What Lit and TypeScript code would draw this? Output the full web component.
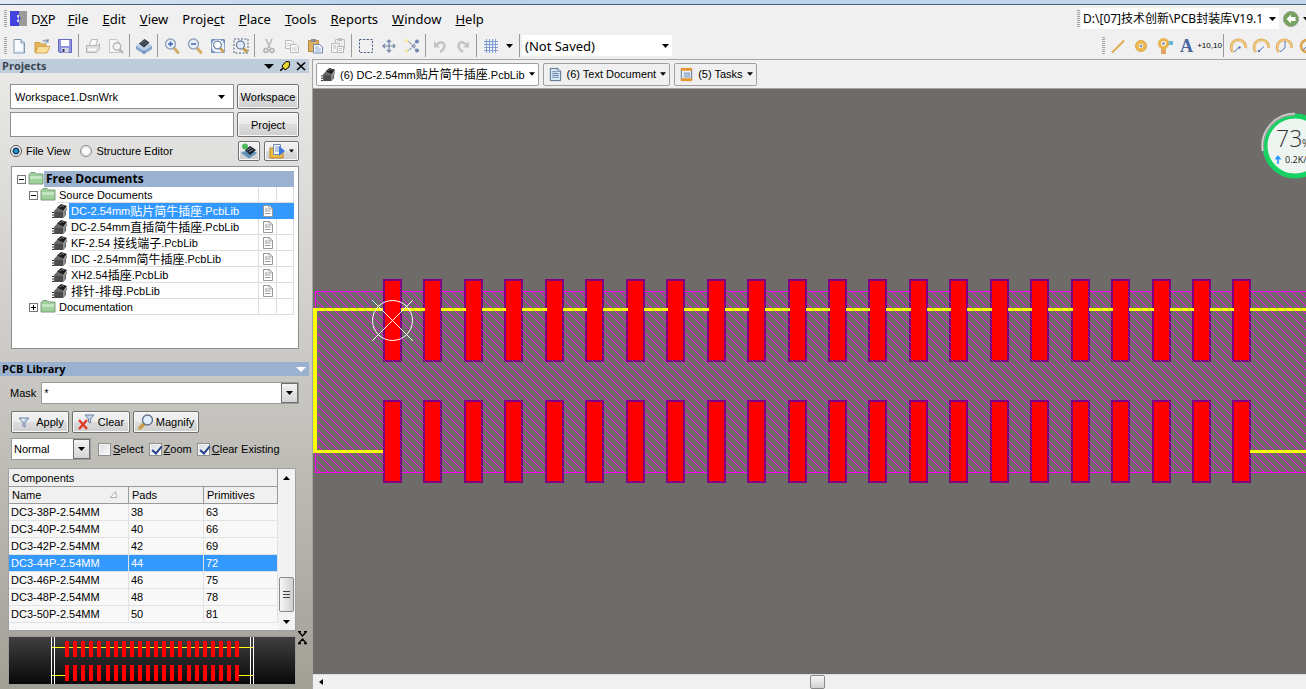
import { LitElement, html, svg, css, nothing } from "lit";
import { customElement, state } from "lit/decorators.js";
import { classMap } from "lit/directives/class-map.js";

const magnifier = svg`
  <path d="M10 10l4 4.500" stroke="#d3ad68" stroke-width="3" stroke-linecap="round"/>
  <circle cx="6.500" cy="6" r="5" fill="#e6effa" stroke="#94a4ba" stroke-width="1.400"/>`;

const chip = svg`
  <path d="M0 9.500h4M0 12h4M0 14.500h4" stroke="#222" stroke-width="1"/>
  <path d="M2 8l4-4 8 4v4l-3 3H2z" fill="#666"/>
  <path d="M3 9h8v6H3z" fill="#4b4b4b"/>
  <path d="M5 4.500L9 1l6 2-3.500 4.500z" fill="#1d1d1d"/>
  <path d="M7 4.500l3-2 2 .8" stroke="#777" fill="none"/>
  <path d="M11 8l4-4v3l-2 2v4l-2 2z" fill="#8c8c8c"/>`;

const funnel = svg`<path d="M3 4h10L9 8.500V13l-2-1V8.500z" fill="#c3d3e8" stroke="#6f86a6"/><path d="M5 5h4L7.500 7z" fill="#f4f8fd"/>`;

const gauge = (hand: unknown) => svg`
  <path d="M3 14A7.200 7.200 0 1 1 15.500 10" fill="none" stroke="#dba552" stroke-width="2.600"/>
  <path d="M3 13.500A7 7 0 1 1 15.300 10" fill="none" stroke="#f5cf87" stroke-width="1.200"/>${hand}`;

const icons: Record<string, unknown> = {
  newDoc: svg`<path d="M3 1.500h7l3.500 3.500v10H3z" fill="#f8fbff" stroke="#7c94ad"/><path d="M10 1.500v3.500h3.500" fill="#cfdfef" stroke="#7c94ad"/><path d="M12.500 6v8H5" fill="none" stroke="#b9d2ea"/>`,
  open: svg`<path d="M1 4.500h5l1.500 1.500H12v3H4l-2.500 5.500H1z" fill="#e3b75a" stroke="#cb9c4a"/><path d="M4 8.500h12l-3 6.500H1.500z" fill="#fbdf98" stroke="#d6a750"/><path d="M9 3.500q3-3 5 0m0-2.500v3h-3" fill="none" stroke="#7189a8" stroke-width="1.200"/>`,
  save: svg`<path d="M1.500 1.500h13v13h-12l-1-1z" fill="#8e94e0" stroke="#6469bd"/><path d="M4 2h8v6H4z" fill="#fff"/><path d="M4.500 10h7v4.500h-7z" fill="#d8dae6"/><path d="M5.500 11h2v3h-2z" fill="#33386f"/>`,
  print: svg`<path d="M4.500 7l2-5.500h6L11 7" fill="#fafafa" stroke="#b8b8b8"/><path d="M1.500 7.500h11l2-1.500v5l-3 3.500h-10z" fill="#dedede" stroke="#b3b3b3"/><path d="M3 11.500h8" stroke="#fff" stroke-width="2"/>`,
  preview: svg`<path d="M1.500 1.500h7l3 3v10h-10z" fill="#f6f6f6" stroke="#c4c4c4"/><path d="M11.500 11.500l3.500 3.500" stroke="#bbb" stroke-width="2.500"/><circle cx="9" cy="8.500" r="3.700" fill="#f4f4f4" stroke="#b5b5b5" stroke-width="1.400"/>`,
  board: svg`<path d="M0 8l8-5 8 5v3l-8 5-8-5z" fill="#7ea2cc"/><path d="M0 8l8-5 8 5-8 5z" fill="#bdd0e6"/><path d="M3 5.500L8.500 1l5 3.500-5.500 5z" fill="#2d3640"/><path d="M5 5.500l4-3M7 7l4-3" stroke="#77818c"/><path d="M8 13v3" stroke="#557aa6"/>`,
  zoomIn: svg`${magnifier}<path d="M4 6h5M6.500 3.500v5" stroke="#3f68ae" stroke-width="1.500"/>`,
  zoomOut: svg`${magnifier}<path d="M4 6h5" stroke="#3f68ae" stroke-width="1.500"/>`,
  zoomFit: svg`<path d="M1.500 1.500h13v13h-13z" fill="#eef4fc" stroke="#92a7c4"/><path d="M2 5V2h3M14 5V2h-3M2 11v3h3" fill="none" stroke="#4a6fae"/><path d="M10 10l3.500 4" stroke="#c99a45" stroke-width="2.600"/><circle cx="7.500" cy="7" r="3.800" fill="#fff" stroke="#7389a8" stroke-width="1.300"/>`,
  zoomSel: svg`<path d="M1 1h14v14H1z" fill="none" stroke="#4d5f7a" stroke-dasharray="2 1.500"/><path d="M10 10l4 4" stroke="#c99a45" stroke-width="2.800"/><circle cx="7.500" cy="7" r="4" fill="#dfeafa" stroke="#7389a8" stroke-width="1.300"/>`,
  cut: svg`<path d="M5 1l4 9M11 1L7 10" stroke="#bdbdbd" stroke-width="1.800"/><circle cx="5" cy="12.500" r="2" fill="none" stroke="#b0b0b0" stroke-width="1.600"/><circle cx="11" cy="12.500" r="2" fill="none" stroke="#b0b0b0" stroke-width="1.600"/>`,
  copy: svg`<path d="M1.500 2.500h6l2 2v6h-8z" fill="#f7f7f7" stroke="#bcbcbc"/><path d="M6.500 6.500h6l2 2v6h-8z" fill="#f7f7f7" stroke="#bcbcbc"/><path d="M3 5.500h4M3 7.500h3M8 10h5M8 12h5" stroke="#ccc"/>`,
  paste: svg`<path d="M1.500 2.500h10v11h-10z" fill="#e0b05c" stroke="#b58a44"/><path d="M4 1h5v3H4z" fill="#8b8b93"/><path d="M6.500 6.500h6l3 2.500v6h-9z" fill="#fff" stroke="#6785ad"/><path d="M8 9h4M8 11h6M8 13h6" stroke="#88a5cd"/>`,
  pasteMany: svg`<path d="M5.500 1.500h9v9h-9z" fill="#ececec" stroke="#bdbdbd"/><path d="M8 0h4v3H8z" fill="#c2c2c2"/><path d="M1.500 5.500h8v9h-8z" fill="#f4f4f4" stroke="#bdbdbd"/><path d="M7.500 8.500h6v6h-6z" fill="#fafafa" stroke="#b5b5b5"/><path d="M9 10.500h3M9 12.500h3M3 8h3M3 10h3" stroke="#c2c2c2"/>`,
  marquee: svg`<path d="M1.500 1.500h13v13h-13z" fill="none" stroke="#4d6182" stroke-dasharray="2.200 1.400"/>`,
  move: svg`<path d="M8 2v12M2 8h12" stroke="#6f84a5" stroke-width="1.200"/><path d="M6 4l2-2 2 2M6 12l2 2 2-2M4 6L2 8l2 2M12 6l2 2-2 2" fill="none" stroke="#6f84a5" stroke-width="1.200"/>`,
  deselect: svg`<path d="M3 3l4 2.500L12 12M3 13l4-2.500L12 4" stroke="#7889a5" stroke-width="1.200" fill="none" stroke-dasharray="2 1"/><circle cx="2.500" cy="3" r="2" fill="#f3e9a8"/><circle cx="2.500" cy="13" r="2" fill="#f3e9a8"/><circle cx="13" cy="3.500" r="2" fill="#6e86b0"/><circle cx="13" cy="12.500" r="2" fill="#6e86b0"/><path d="M9 8h3" stroke="#6e86b0"/>`,
  undo: svg`<path d="M4 7q6-5 8-1t-4 8" fill="none" stroke="#c4c4c4" stroke-width="2.500"/><path d="M2 3v6.500h6z" fill="#c4c4c4"/>`,
  redo: svg`<path d="M12 7Q6 2 4 6t4 8" fill="none" stroke="#c4c4c4" stroke-width="2.500"/><path d="M14 3v6.500H8z" fill="#c4c4c4"/>`,
  grid: svg`<path d="M3.500 1v14M6.500 1v14M9.500 1v14M12.500 1v14M1 3.500h14M1 6.500h14M1 9.500h14M1 12.500h14" stroke="#7f9fd6"/>`,
  line: svg`<path d="M2 14.500L14 2.500" stroke="#d99a33" stroke-width="1.800"/><path d="M2 14L13.500 2.500" stroke="#f7cd7d" stroke-width=".8"/>`,
  pad: svg`<circle cx="8" cy="8" r="4" fill="#fff" stroke="#ecb950" stroke-width="3.400"/><circle cx="8" cy="8" r="5.600" fill="none" stroke="#cf9838" stroke-width=".6"/><circle cx="8" cy="8" r="1.500" fill="#8f97a8"/>`,
  via: svg`<path d="M11 3h6v4h-6z" fill="#66b7d8"/><path d="M5 10h5v6H5z" fill="#e2a463"/><circle cx="7.500" cy="5.500" r="4" fill="#fff" stroke="#e9b44b" stroke-width="3"/><circle cx="7.500" cy="5.500" r="1.500" fill="#8f97a8"/>`,
  gaugeA: gauge(svg`<path d="M4 14l5-4.500" stroke="#5377c4"/><circle cx="9.500" cy="9.500" r="1.200" fill="#5377c4"/>`),
  gaugeB: gauge(svg`<path d="M6 13l5-4.500" stroke="#5377c4"/><circle cx="6" cy="13" r="1.200" fill="#5377c4"/>`),
  gaugeC: gauge(svg`<path d="M4 14l5-4V3" stroke="#5377c4" fill="none"/>`),
  gaugeD: svg`<circle cx="8" cy="8" r="6" fill="none" stroke="#dba552" stroke-width="2.600"/><path d="M4 12l5-5" stroke="#5377c4"/>`,
  back: svg`<circle cx="8" cy="8" r="7.500" fill="#75a360" stroke="#9a9a8c"/><path d="M8 3.500L3.500 8 8 12.500V10h4.500V6H8z" fill="#fff"/>`,
  chip,
  doc: svg`<path d="M2.500 1.500h8l3 3v10h-11z" fill="#d8e6f4" stroke="#4d6a8c"/><path d="M4.500 5h5M4.500 7h7M4.500 9h7M4.500 11h7" stroke="#6686ac"/><path d="M10.500 1.500v3h3" fill="#fff" stroke="#4d6a8c"/>`,
  tasks: svg`<path d="M2.500 1.500h11v13h-11z" fill="#eaf2fb" stroke="#56708f"/><path d="M2 1h12v3H2zM2 12h12v3H2z" fill="#e8952e"/><path d="M5 6.500h7M5 8.500h7M5 10.500h7" stroke="#6686ac"/>`,
  folder: svg`<path d="M1 3.500l2-2h4l1.500 1.500H15v10H1z" fill="#9fd09c" stroke="#7c9a7a"/><path d="M2 5h12v3H2z" fill="#c3e5c1"/>`,
  page: svg`<path d="M3.500 2.500h6l3 3v8h-9z" fill="#fff" stroke="#999"/><path d="M9 2.500V6h3.500M5 6h3M5 8h5.500M5 10.500h5.500" fill="none" stroke="#999"/>`,
  compile: svg`<path d="M0 10l8-4 8 4-8 5.500z" fill="#5f93bd"/><path d="M4 7l5-4 6 4-6 5z" fill="#18202a"/><path d="M6 7.500l4-2.500M8 9l4-2.500" stroke="#8a96a4"/><circle cx="4" cy="3.500" r="3" fill="#4fbb5c"/>`,
  explore: svg`<path d="M1 5h5l1 2h7v8H1z" fill="#f1bd45" stroke="#b98522"/><path d="M4.500 1.500h7v10h-7z" fill="#f4f8ff" stroke="#7088b0"/><path d="M6 4h4M6 6h4M6 8h4" stroke="#7b98c8"/><path d="M10 3l6 5-6 5z" fill="#3c78dd"/>`,
  funnel,
  clear: svg`<path d="M7 1h9l-3.500 4v4l-2-1V5z" fill="#c3d3e8" stroke="#6f86a6"/><path d="M1 6l8 9M9 6l-8 9" stroke="#e23a26" stroke-width="2.400"/>`,
  magnify: svg`<path d="M6 10l-4 4" stroke="#c99a45" stroke-width="3.500" stroke-linecap="round"/><circle cx="9.500" cy="6" r="5" fill="#e3eefb" stroke="#66758c" stroke-width="1.400"/>`,
};

const icon = (name: string) =>
  html`<svg class="icon" viewBox="0 0 16 16" aria-hidden="true">${icons[name]}</svg>`;
const caret = html`<svg class="caret" viewBox="0 0 7 4" aria-hidden="true"><path d="M0 0h7L3.500 4z" fill="#000"/></svg>`;

const menus = [["D", "X", "P"], ["", "F", "ile"], ["", "E", "dit"], ["", "V", "iew"], ["Proje", "c", "t"], ["", "P", "lace"], ["", "T", "ools"], ["", "R", "eports"], ["", "W", "indow"], ["", "H", "elp"]];

const tools = ["newDoc", "open", "save", "|", "print", "preview", "|", "board", "|", "zoomIn", "zoomOut", "zoomFit", "zoomSel", "|", "cut", "copy", "paste", "pasteMany", "|", "marquee", "move", "deselect", "|", "undo", "redo", "|", "grid"];

const files: [string, string, string][] = [
  ["DC-2.54mm", "贴片简牛插座", ".PcbLib"],
  ["DC-2.54mm", "直插简牛插座", ".PcbLib"],
  ["KF-2.54 ", "接线端子", ".PcbLib"],
  ["IDC -2.54mm", "简牛插座", ".PcbLib"],
  ["XH2.54", "插座", ".PcbLib"],
  ["", "排针-排母", ".PcbLib"],
];

const components = [
  [38, 63], [40, 66], [42, 69], [44, 72], [46, 75], [48, 78], [50, 81],
];

@customElement("app-root")
export class AppRoot extends LitElement {
  @state() private file = 0;
  @state() private pads = 44;

  static styles = css`
    :host { display: flex; flex-direction: column; height: 100vh; overflow: hidden; background: #f0f0f0; color: #000; font: 11px/14px "Liberation Sans", "Noto Sans CJK SC", sans-serif; }
    * { box-sizing: border-box; }
    button, select, input { font: inherit; color: inherit; margin: 0; padding: 0; border-radius: 0; }
    button, select { appearance: none; border: 0; background: none; }
    .titlebar { flex: none; height: 5px; background: linear-gradient(90deg, #dfeaf4, #b9d1ea 30%, #c4d8ec); border-bottom: 1px solid #4e6076; }
    .bar { flex: none; display: flex; align-items: center; padding-left: 4px; }
    .menubar { height: 27px; font: 13px/18px "Noto Sans", "Noto Sans CJK SC", sans-serif; }
    .toolbar { height: 27px; }
    .grip { flex: none; width: 3px; height: 17px; background: repeating-linear-gradient(#a4a4a4 0 1px, #f0f0f0 1px 2px); }
    .logo { width: 17px; height: 15px; margin-left: 3px; }
    .menu { padding: 0 7px; }
    .menu.first { padding: 0 5px 0 4px; }
    .icon { display: block; flex: none; width: 16px; height: 16px; overflow: visible; }
    .caret { display: block; flex: none; width: 7px; height: 4px; }
    .tool { flex: none; width: 23px; height: 23px; display: flex; align-items: center; justify-content: center; }
    .narrow { width: 15px; }
    .sep { flex: none; width: 1px; height: 23px; margin: 0 2px; background: #999; }
    .pick { position: relative; display: flex; background: #fff; }
    .pick select { width: 100%; height: 100%; padding: 0 22px 0 4px; text-overflow: ellipsis; }
    .pick .caret { position: absolute; right: 8px; top: calc(50% - 2px); pointer-events: none; }
    .saved { width: 150px; height: 21px; font: 13px/18px "Noto Sans", sans-serif; }
    .saved .caret, .path .caret { right: 3px; }
    .saved select { padding-left: 3px; }
    .path { width: 198px; height: 21px; margin: 0 4px 0 1px; }
    .path select { padding: 0 14px 0 2px; text-overflow: clip; font-size: 12px; }
    .right { margin-left: auto; display: flex; align-items: center; flex: none; }
    .history { margin-right: -8px; }
    .bleed { margin-right: -12px; }
    .bleed .grip { margin-right: 1px; }
    .letter { font: bold 18px/20px "Liberation Serif", serif; color: #4a64a0; }
    .coord { font: 8px/10px "Liberation Sans", sans-serif; }
    .work { flex: 1; min-height: 0; display: flex; }
    .side { flex: none; width: 313px; padding-right: 3px; border-right: 1px solid #a5a5a5; display: flex; flex-direction: column; background: linear-gradient(#eaeae9, #cac8c4 50%, #a29f96); }
    .head { margin: 0; height: 14px; display: flex; align-items: center; gap: 6px; padding: 0 3px 0 2px; background: #bfcddb; color: #3d4654; font: bold 11px/14px "Open Sans", sans-serif; }
    .head.lib { margin-top: 13px; background: #9ab2cf; color: #000; }
    .head span { flex: 1; }
    .mini { width: 10px; height: 12px; display: flex; align-items: center; justify-content: center; }
    .mini svg { flex: none; width: 10px; height: 10px; }
    .form { display: grid; grid-template-columns: 1fr 62px; gap: 3px; padding: 11px 10px 0; }
    .field { height: 25px; border: 1px solid #8e8f8f; background: #fff; padding: 0 4px; width: 100%; }
    .form .pick, .form input { height: 25px; border: 1px solid #8e8f8f; }
    .push { border: 1px solid #707070; border-radius: 2px; background: linear-gradient(#f2f2f2, #ebebeb 50%, #dcdcdc 50%, #cfcfcf); box-shadow: inset 0 0 0 1px #fafafa; display: flex; align-items: center; justify-content: center; white-space: nowrap; }
    .views { display: flex; align-items: center; height: 22px; margin: 3px 10px 4px; }
    .views label, .checks label { display: flex; align-items: center; }
    .views label { gap: 4px; margin-right: 10px; }
    .views input { appearance: none; width: 12px; height: 12px; border: 1px solid #8e8f8f; border-radius: 50%; background: radial-gradient(#fff 30%, #ccc); }
    .views input:checked { background: radial-gradient(#2a9ad0 0 1px, #123c5c 3px, #fff 4px, #ddd); border-color: #555; }
    .gap { flex: 1; }
    .compile { width: 22px; height: 20px; margin-right: 4px; }
    .explore { width: 35px; height: 20px; gap: 4px; }
    .explore .caret { width: 5px; }
    .tree { list-style: none; margin: 0 10px 0 11px; height: 183px; padding: 4px 4px 4px 5px; background: #fff; border: 1px solid #8e8f8f; }
    .row { display: flex; height: 16px; align-items: stretch; }
    .row.l1 { padding-left: 12px; }
    .row.l2 { padding-left: 35px; }
    .twist { align-self: center; width: 9px; height: 9px; margin-right: 2px; border: 1px solid #777; background: #fff; position: relative; }
    .twist::before, .row .plus::after { content: ""; position: absolute; background: #000; left: 1px; top: 3px; width: 5px; height: 1px; }
    .row .plus::after { left: 3px; top: 1px; width: 1px; height: 5px; }
    .name { flex: 1; display: flex; border-bottom: 1px solid #ddd; margin-left: 1px; padding-left: 2px; line-height: 16px; white-space: pre; text-align: left; align-items: center; }
    .cell { width: 18px; border: 1px solid #ddd; border-width: 0 0 1px 1px; display: flex; justify-content: center; }
    .cell.last { border-right-width: 1px; }
    .root .name { background: #9ab2cf; font: bold 12px/16px "Open Sans", sans-serif; border: 0; margin-left: 0; }
    .picked .name, .picked .cell { background: #3399ff; color: #fff; border-color: #3399ff; }
    .cjk { font-size: 12px; font-family: "Noto Sans CJK SC", sans-serif; line-height: 16px; }
    .mask { display: flex; align-items: center; gap: 5px; margin: 6px 10px 0; }
    .drop { border: 1px solid #9a9a9a; height: 22px; }
    .drop.wide { flex: 1; }
    .drop.small { width: 80px; }
    .drop .knob { position: absolute; right: 0; top: 0; bottom: 0; width: 17px; border: 1px solid #707070; background: linear-gradient(#f2f2f2, #d4d4d4); pointer-events: none; display: flex; align-items: center; justify-content: center; }
    .drop .knob .caret { position: static; }
    .drop select { padding-left: 2px; }
    .actions { display: flex; gap: 3px; margin: 7px 11px 5px; }
    .actions .push { height: 22px; width: 58px; gap: 4px; }
    .actions .push.mag { width: 66px; gap: 2px; }
    .checks { display: flex; align-items: center; margin: 0 11px; }
    .checks label { gap: 2px; margin-left: 5px; white-space: nowrap; }
    .checks .drop { margin-right: 2px; }
    .checks input { appearance: none; width: 13px; height: 13px; border: 1px solid #8e8f8f; background: linear-gradient(135deg, #d5d8dc, #fff); box-shadow: inset 0 0 0 1px #f4f4f4; display: flex; }
    .checks input:checked::after { content: ""; width: 4px; height: 8px; margin: 0 0 0 4px; border: solid #27418f; border-width: 0 2px 2px 0; transform: rotate(40deg); }
    .list { flex: none; display: flex; height: 163px; margin: 8px 13px 0 8px; border: 1px solid #a0a0a0; background: #f8f8f8; align-items: stretch; }
    table { flex: 1; align-self: flex-start; border-collapse: separate; border-spacing: 0; table-layout: fixed; }
    th, td { height: 17px; padding: 0 3px; font-weight: normal; text-align: left; border: 0 solid #e2e2e2; border-width: 0 1px 1px 0; }
    td { padding-left: 2px; }
    th { background: #f0f0f0; border-color: #9a9a9a; }
    th.group { height: 18px; }
    .sort { float: right; color: #aaa; margin-right: 8px; width: 7px; height: 7px; margin-top: 3px; }
    .c1 { width: 120px; }
    .c2 { width: 75px; }
    tr.picked td { background: #3399ff; color: #fff; }
    .vscroll { width: 17px; background: #f2f2f2; display: flex; flex-direction: column; align-items: center; padding: 7px 0 6px; }
    .thumb { width: 15px; height: 35px; margin-bottom: 8px; border: 1px solid #8a8a8a; border-radius: 2px; background: linear-gradient(90deg, #f6f6f6, #d0d0d0); display: flex; align-items: center; justify-content: center; }
    .thumb i { width: 7px; height: 8px; background: repeating-linear-gradient(#444 0 1px, transparent 1px 3px); }
    .bottom { display: flex; align-items: flex-start; margin: 0 2px 0 8px; }
    .bottom svg.map { flex: none; width: 288px; height: 49px; margin-top: 5px; border: 1px solid #9a9a9a; background: linear-gradient(#404040, #080808); }
    .fold { width: 9px; height: 14px; margin-left: 2px; display: flex; }
    .main { flex: 1; min-width: 0; display: flex; flex-direction: column; }
    .tabs { flex: none; height: 30px; display: flex; align-items: center; gap: 4px; padding: 0 3px; border-top: 1px solid #a5a5a5; border-bottom: 1px solid #a5a5a5; }
    .tab { height: 23px; padding: 0 3px 0 4px; gap: 4px; display: flex; align-items: center; border: 1px solid #a0a0a0; border-radius: 2px; background: #f0f0f0; white-space: nowrap; }
    .tab .icon { width: 15px; height: 15px; }
    .tab .caret { width: 6px; }
    .tab.on { background: #fff; }
    .canvas { flex: 1; min-height: 0; position: relative; overflow: hidden; background: #6f6b69; }
    .canvas .board { display: block; width: 100%; height: 100%; }
    .meter { position: absolute; right: -23px; top: 23px; width: 68px; height: 68px; }
    .meter svg { width: 100%; height: 100%; display: block; overflow: visible; }
    .hscroll { flex: none; height: 15px; display: flex; align-items: center; padding: 0 6px; background: #f0f0f0; border-top: 1px solid #ddd; }
    .track { flex: 1; display: flex; justify-content: center; padding-left: 12px; }
    .hthumb { width: 15px; height: 14px; border: 1px solid #8a8a8a; border-radius: 2px; background: linear-gradient(#f8f8f8, #d0d0d0); }
  `;

  private drop(label: string, value: string, cls: string, knob = false) {
    return html`<div class="pick ${cls}"><select aria-label=${label}><option>${value}</option></select>${knob ? html`<span class="knob">${caret}</span>` : caret}</div>`;
  }

  private tool(name: string) {
    return name === "|" ? html`<span class="sep"></span>` : html`<button class="tool" aria-label=${name}>${icon(name)}</button>`;
  }

  private tab(name: string, label: unknown, on = false) {
    return html`<button class="tab ${on ? "on" : ""}">${icon(name)}<span class="label">${label}</span>${caret}</button>`;
  }

  private folder(name: string, level: string, open: boolean) {
    const root = level === "root";
    return html`<li class="row ${level}"><span class="twist ${open ? "" : "plus"}"></span>${icon("folder")}<span class="name">${name}</span>${root ? nothing : html`<span class="cell"></span><span class="cell last"></span>`}</li>`;
  }

  private sidebar() {
    return html`<aside class="side">
      <h2 class="head"><span>Projects</span>
        <button class="mini" aria-label="Menu"><svg viewBox="0 0 10 10"><path d="M0 3h10L5 8z"/></svg></button>
        <button class="mini" aria-label="Pin"><svg viewBox="0 0 10 10"><path d="M0 10l3-3" stroke="#000" stroke-width="1.500"/><path d="M2 5l4-4.500 4 .5-1 5-4 3z" fill="#e8d832" stroke="#000"/></svg></button>
        <button class="mini" aria-label="Close"><svg viewBox="0 0 10 10"><path d="M1 1.500l8 7.500M9 1.500L1 9" stroke="#000" stroke-width="1.600"/></svg></button>
      </h2>
      <div class="form">
        ${this.drop("Workspace", "Workspace1.DsnWrk", "")}
        <button class="push">Workspace</button>
        <input class="field" aria-label="Project" />
        <button class="push">Project</button>
      </div>
      <div class="views">
        <label><input type="radio" name="view" checked />File View</label>
        <label><input type="radio" name="view" />Structure Editor</label>
        <span class="gap"></span>
        <button class="push compile" aria-label="Compile">${icon("compile")}</button>
        <button class="push explore" aria-label="Explore">${icon("explore")}${caret}</button>
      </div>
      <ul class="tree">
        ${this.folder("Free Documents", "root", true)}
        ${this.folder("Source Documents", "l1", true)}
        ${files.map(([a, b, c], i) => html`<li class=${classMap({ row: true, l2: true, picked: i === this.file })} @click=${() => (this.file = i)}>
          ${icon("chip")}<span class="name">${a}<span class="cjk">${b}</span>${c}</span><span class="cell">${icon("page")}</span><span class="cell last"></span></li>`)}
        ${this.folder("Documentation", "l1", false)}
      </ul>
      <h2 class="head lib"><span>PCB Library</span><button class="mini" aria-label="Collapse"><svg viewBox="0 0 10 10"><path d="M0 3h10L5 8z" fill="#fff"/></svg></button></h2>
      <div class="mask"><span>Mask</span>${this.drop("Mask", "*", "drop wide", true)}</div>
      <div class="actions">
        <button class="push">${icon("funnel")}Apply</button>
        <button class="push">${icon("clear")}Clear</button>
        <button class="push mag">${icon("magnify")}Magnify</button>
      </div>
      <div class="checks">
        ${this.drop("Mode", "Normal", "drop small", true)}
        <label><input type="checkbox" /><span><u>S</u>elect</span></label>
        <label><input type="checkbox" checked /><span><u>Z</u>oom</span></label>
        <label><input type="checkbox" checked /><span><u>C</u>lear Existing</span></label>
      </div>
      <div class="list">
        <table>
          <colgroup><col class="c1" /><col class="c2" /><col /></colgroup>
          <thead>
            <tr><th class="group" colspan="3">Components</th></tr>
            <tr><th>Name<svg class="sort" viewBox="0 0 7 7"><path d="M.5 6.500h6L5.500.500z" fill="#fff" stroke="#aaa"/></svg></th><th>Pads</th><th>Primitives</th></tr>
          </thead>
          <tbody>${components.map(([p, n]) => html`<tr class=${classMap({ picked: p === this.pads })} @click=${() => (this.pads = p)}><td>DC3-${p}P-2.54MM</td><td>${p}</td><td>${n}</td></tr>`)}</tbody>
        </table>
        <div class="vscroll">
          <svg class="caret" viewBox="0 0 7 4"><path d="M0 4h7L3.500 0z"/></svg><span class="gap"></span>
          <div class="thumb"><i></i></div>${caret}
        </div>
      </div>
      <div class="bottom">
        <svg class="map">
          <path d="M42 10.500h203M42 38.500h15M230 38.500h15" stroke="#ffff00"/>
          ${Array.from({ length: 22 }, (_, i) => { const x = 56 + Math.round(i * 8.1); return svg`<path d="M${x} 4h4v16h-4zM${x} 28h4v16h-4z" fill="#ff0000"/>`; })}
          <path d="M42.500 0v49M45.500 0v49M241.500 0v49M244.500 0v49" stroke="#fff"/>
        </svg>
        <button class="fold" aria-label="Fold"><svg width="9" height="14" viewBox="0 0 9 14"><path d="M0 .5h3M6 .5h3M1 1l3.500 4L8 1M0 12.500h3M6 12.500h3M1 12l3.500-4L8 12" fill="none" stroke="#000" stroke-width="1.400"/></svg></button>
      </div>
    </aside>`;
  }

  private board() {
    const xs = Array.from({ length: 22 }, (_, i) => 70 + Math.round(i * 40.45));
    const pad = (x: number, y: number) => svg`<rect x=${x + 1} y=${y + 1} width="17" height="81" fill="#ff0000" stroke="#800080" stroke-width="2"/>`;
    return html`<svg class="board">
      <defs><pattern id="hatch" x="2" y="202" width="8" height="8" patternUnits="userSpaceOnUse">${Array.from({ length: 8 }, (_, i) => svg`<rect x=${i} y=${i} width="1" height="1" fill="#ff00ff"/>`)}</pattern></defs>
      <rect x="2" y="202" width="100%" height="182" fill="url(#hatch)"/>
      <rect x="2" y="202" width="100%" height="1" fill="#ff00ff"/>
      <rect x="2" y="383" width="100%" height="1" fill="#ff00ff"/>
      <rect x="2" y="202" width="1" height="182" fill="#ff00ff"/>
      <path d="M72 220.500H2V362.500H72" fill="none" stroke="#ffff00" stroke-width="3"/>
      <rect x="0" y="219" width="4" height="145" fill="#ffff00"/>
      ${xs.map((x) => [pad(x, 190), pad(x, 311)])}
      ${xs.slice(0, -1).map((x, i) => svg`<path d="M${x + 18} 220.500H${xs[i + 1] + 2}" stroke="#ffff00" stroke-width="3"/>`)}
      <path d="M937 220.500H3000M937 362.500H3000" stroke="#ffff00" stroke-width="3"/>
      <g fill="none" stroke="#fff"><circle cx="79.500" cy="231.500" r="20"/><path d="M59 211l41 41M100 211l-41 41"/></g>
    </svg>`;
  }

  render() {
    return html`
      <div class="titlebar"></div>
      <nav class="bar menubar">
        <span class="grip"></span>
        <svg class="logo" viewBox="0 0 17 15"><path d="M0 0h9v15H0z" fill="#4343e0"/><path d="M9 0h8v15H9z" fill="#9b9b9b"/><path d="M7 4h2v7H7V9l2-1.500L7 6z" fill="#dcdcf4"/><path d="M9 4.500q3 3 0 6z" fill="#4343e0"/></svg>
        ${menus.map(([a, b, c], i) => html`<button class="menu ${i === 0 ? "first" : ""}">${a}<u>${b}</u>${c}</button>`)}
        <div class="right"><span class="grip"></span>${this.drop("Path", "D:\\[07]技术创新\\PCB封装库V19.1", "path")}<button aria-label="Back">${icon("back")}</button><button class="tool narrow history" aria-label="History">${caret}</button></div>
      </nav>
      <div class="bar toolbar">
        <span class="grip"></span>
        ${tools.map((t) => this.tool(t))}
        <button class="tool narrow" aria-label="Grid sizes">${caret}</button><span class="sep"></span>
        ${this.drop("Filter", "(Not Saved)", "saved")}
        <div class="right bleed">
          <span class="grip"></span>${["line", "pad", "via"].map((t) => this.tool(t))}
          <button class="tool letter">A</button><button class="tool coord">+10,10</button><span class="sep"></span>
          ${["gaugeA", "gaugeB", "gaugeC", "gaugeD"].map((t) => this.tool(t))}
        </div>
      </div>
      <div class="work">
        ${this.sidebar()}
        <main class="main">
          <div class="tabs">
            ${this.tab("chip", html`(6) DC-2.54mm<span class="cjk">贴片简牛插座</span>.PcbLib`, true)}
            ${this.tab("doc", "(6) Text Document")}
            ${this.tab("tasks", "(5) Tasks")}
          </div>
          <div class="canvas">
            ${this.board()}
            <div class="meter"><svg viewBox="0 0 68 68">
              <circle cx="34" cy="34" r="30" fill="#eef5f0" stroke="#17d163" stroke-width="5"/>
              <path d="M2 39A32 32 0 0 1 34 2" fill="none" stroke="#a5a3a2" stroke-width="3"/>
              <path d="M1.500 39A32.500 32.500 0 0 1 34 1.500" fill="none" stroke="#ddd" stroke-width="1"/>
              <text x="15" y="35" font-family="Open Sans" font-weight="300" font-size="23" fill="#333">73</text>
              <text x="41" y="35" font-family="Open Sans" font-size="10" fill="#333">%</text>
              <path d="M17 52v-7M14.500 47.500L17 44.500l2.500 3" stroke="#1e90ff" stroke-width="1.500" fill="none"/>
              <text x="24" y="51" font-family="Open Sans" font-size="9" fill="#222">0.2K/s</text>
            </svg></div>
          </div>
          <div class="hscroll"><svg width="4" height="6" viewBox="0 0 4 6"><path d="M4 0v6L0 3z"/></svg><div class="track"><div class="hthumb"></div></div></div>
        </main>
      </div>`;
  }
}
